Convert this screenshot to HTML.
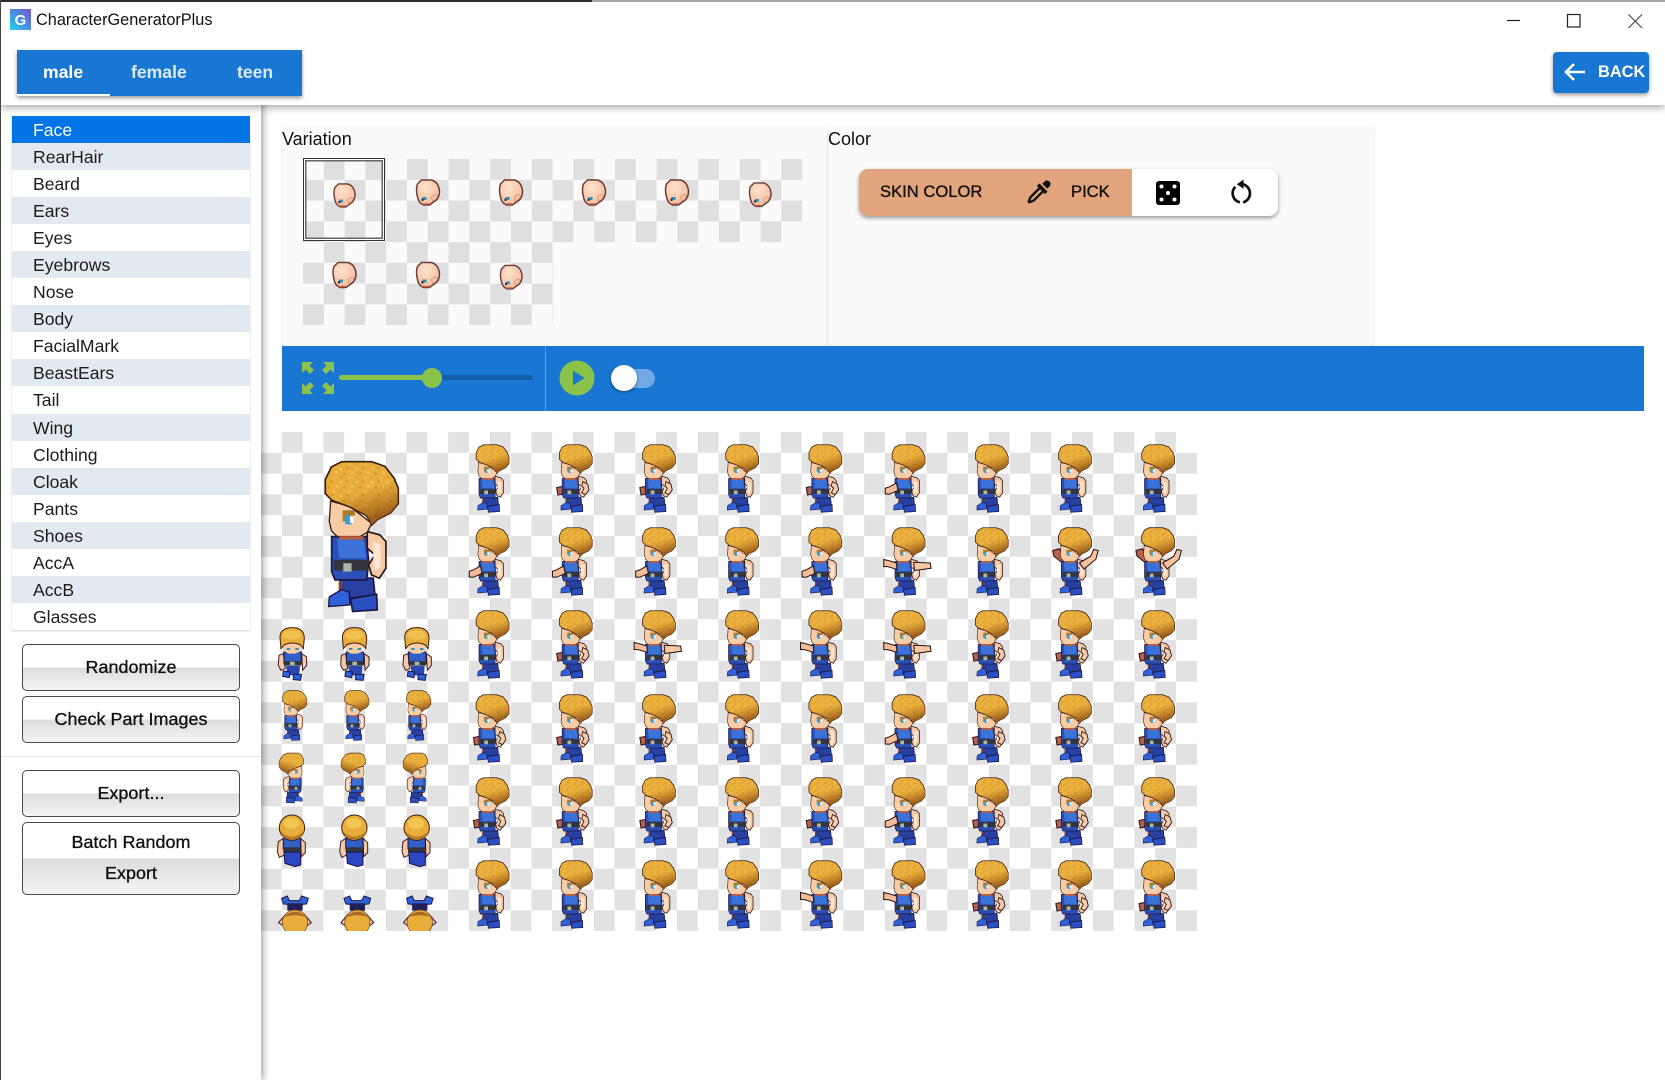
<!DOCTYPE html>
<html lang="en"><head><meta charset="utf-8"><title>CharacterGeneratorPlus</title>
<style>
html,body{margin:0;padding:0;width:1665px;height:1080px;overflow:hidden;background:#fff;font-family:"Liberation Sans",sans-serif;color:#1a1a1a}
.a{position:absolute}
#top1{left:0;top:0;width:592px;height:2px;background:#2e2e2e;z-index:9}
#top2{left:592px;top:0;width:1073px;height:2px;background:#a5a5a5;z-index:9}
#lb{left:0;top:0;width:1px;height:1080px;background:#444;z-index:9}
#hdr{left:0;top:0;width:1665px;height:105px;background:#fff;box-shadow:0 2px 8px rgba(0,0,0,.38);z-index:4}
#title{left:36px;top:10px;font-size:16.3px;line-height:20px;color:#111}
#tabs{left:16.5px;top:49.5px;width:285px;height:46.5px;background:#1976d2;box-shadow:0 2px 4px rgba(0,0,0,.4);color:#fff;font-weight:700;font-size:17.6px}
#tabs span{position:absolute;top:12px;line-height:20px}
#ul{left:0;bottom:0;width:93.5px;height:2.5px;background:#fff}
#back{left:1553px;top:52px;width:96px;height:40.5px;background:#1976d2;border-radius:4px;box-shadow:0 2px 4px rgba(0,0,0,.4);color:#fff;font-weight:700;font-size:16.4px}
#side{left:0;top:0;width:261px;height:1080px;background:#fff;box-shadow:2px 0 7px rgba(0,0,0,.38);z-index:3}
#list{left:12px;top:116px;width:238px;height:514px;box-shadow:0 1px 2px rgba(0,0,0,.18)}
.r{height:27.06px;line-height:28.5px;padding-left:21px;font-size:17.6px;color:#1c1c1c;background:#fff}
.r:nth-child(even){background:#e3e9f0}
.r.s{background:#0274e5;color:#fff}
.b{left:22px;width:216px;border:1.5px solid #484848;border-radius:5px;background:linear-gradient(#fff 0,#fff 50%,#dcdcdc 50%,#f4f4f4 100%);text-align:center;font-size:17.9px;letter-spacing:.05px;color:#111;-webkit-text-stroke:.35px #111}
.card{background:#fafafa;border-radius:5px;box-shadow:0 1px 2px rgba(0,0,0,.16)}
.lbl{font-size:18px;line-height:20px;color:#111}
.chk{background:repeating-conic-gradient(#dfdfdf 0 25%,#fafafa 0 50%) 0 0/41.6px 41.6px}
#bar{left:281.5px;top:346px;width:1362.5px;height:65px;background:#1976d2}
#sheet{left:261px;top:431.5px;width:936px;height:499.5px;background:repeating-conic-gradient(#e2e2e2 0 25%,#fff 0 50%) 0 0/41.6px 41.6px}
#grp{left:859px;top:169px;width:418.5px;height:47px;border-radius:9px;background:#fff;box-shadow:0 2px 4px rgba(0,0,0,.4);overflow:hidden;font-size:16.6px;color:#111}
#or{left:0;top:0;width:273px;height:47px;background:#e3a57e}
#grp span{position:absolute;top:13px;line-height:20px;-webkit-text-stroke:.35px #111}
svg{display:block;position:absolute}
</style></head><body>
<div class="a" id="top1"></div><div class="a" id="top2"></div><div class="a" id="lb"></div>

<div class="a" id="sheet"></div>

<svg style="left:261px;top:431px" width="936" height="500" viewBox="261 431 936 500">
<defs>
<pattern id="sp" width="47" height="41" patternUnits="userSpaceOnUse">
<rect width="47" height="41" fill="#e8ad3a"/>
<rect x="4" y="5" width="7" height="7" fill="#f3c95c"/><rect x="24" y="2" width="7" height="7" fill="#d2952c"/><rect x="38" y="16" width="7" height="7" fill="#f3c95c"/><rect x="15" y="20" width="7" height="7" fill="#d2952c"/><rect x="3" y="31" width="7" height="7" fill="#dba034"/><rect x="30" y="32" width="7" height="7" fill="#f0c252"/>
</pattern>
<linearGradient id="hs" x1="0" y1="0" x2=".35" y2="1"><stop offset=".55" stop-color="#a8641c" stop-opacity="0"/><stop offset="1" stop-color="#8f5214" stop-opacity=".85"/></linearGradient>
<g id="hair"><path d="M245 110H335L375 124L403 160L415 190V236L392 264L352 284L336 300L320 272L270 246L216 226L196 206V164L214 126Z" fill="url(#sp)" stroke="#3a1c12" stroke-width="5"/>
<path d="M245 110H335L375 124L403 160L415 190V236L392 264L352 284L336 300L320 272L270 246L216 226L196 206V164L214 126Z" fill="url(#hs)"/></g>
<g id="s0">
<path d="M240 460H340L345 510L270 520L248 510Z" fill="#28409f" stroke="#1c1640" stroke-width="5"/>
<rect x="236" y="470" width="10" height="38" fill="#8a3e2c"/>
<path d="M208 516L245 494L268 502L270 540L206 545Z" fill="#2f62d8" stroke="#1c1640" stroke-width="4"/>
<path d="M272 522L350 508L352 555L278 560Z" fill="#2a50c4" stroke="#1c1640" stroke-width="5"/>
<path d="M215 335H320L326 410L320 465H225L215 440Z" fill="#2a50b8" stroke="#1c1640" stroke-width="5"/>
<path d="M232 342L312 346L318 400H236Z" fill="#3a72d8"/>
<rect x="222" y="405" width="104" height="32" fill="#33343c"/><rect x="250" y="415" width="25" height="25" fill="#a8b8a8"/>
<path d="M322 320L360 330L378 350V430L358 460L335 450L326 420L345 390L322 370Z" fill="#f6c9a6" stroke="#2a1418" stroke-width="5"/>
<path d="M340 350L362 360L362 425L345 440L340 415Z" fill="#fde6d2"/>
<path d="M212 228L270 245L335 295L322 322L300 335H232L215 318L208 290Z" fill="#f8cda6" stroke="#3a1c12" stroke-width="4"/>
<rect x="238" y="334" width="72" height="10" fill="#c05c40"/>
<path d="M248 256H286L284 272H262L256 290L248 290Z" fill="#a87c34"/><rect x="256" y="272" width="20" height="26" fill="#2aa0e8"/><rect x="270" y="274" width="10" height="20" fill="#fff"/>
<use href="#hair"/></g>
<g id="s" transform="scale(.15) translate(-135,-105)"><use href="#s0"/></g>
<g id="p" transform="scale(.15) translate(-135,-105)"><path d="M178 395L232 385L240 435L186 445Z" fill="#b9604a" stroke="#2a1418" stroke-width="7"/><use href="#s0"/><path d="M352 355L385 372L394 410L372 442L345 430L360 400L345 385Z" fill="#f7cbaa" stroke="#2a1418" stroke-width="6"/></g>
<g id="l" transform="scale(.15) translate(-135,-105)"><use href="#s0"/><path d="M225 365L175 392L150 400L150 438L178 440L235 415Z" fill="#f4bd98" stroke="#2a1418" stroke-width="7"/></g>
<g id="h" transform="scale(.15) translate(-135,-105)"><use href="#s0"/><path d="M225 345L170 328L140 322L140 368L170 370L228 388Z" fill="#f4bd98" stroke="#2a1418" stroke-width="7"/></g>
<g id="x" transform="scale(.15) translate(-135,-105)"><use href="#s0"/><path d="M225 345L170 328L140 322L140 368L170 370L228 388Z" fill="#f4bd98" stroke="#2a1418" stroke-width="7"/><path d="M340 340L450 345L455 380L345 395Z" fill="#f7c8a6" stroke="#2a1418" stroke-width="7"/></g>
<g id="u" transform="scale(.15) translate(-135,-105)"><path d="M222 345L165 300L158 262L200 250L240 310Z" fill="#b9604a" stroke="#2a1418" stroke-width="7"/><use href="#s0"/><path d="M335 345L410 300L430 255L460 262L445 320L365 385Z" fill="#f5c29e" stroke="#2a1418" stroke-width="7"/><use href="#hair"/></g>
<g id="f" transform="scale(.3333) translate(-55,-20)">
<path d="M57 105L70 100L76 145L63 150L55 135ZM125 100L140 110V135L128 150Z" fill="#f6c9a6" stroke="#3a1c2a" stroke-width="3"/>
<rect x="72" y="95" width="52" height="35" fill="#2f60c8" stroke="#1c1640" stroke-width="3"/>
<rect x="72" y="122" width="52" height="14" fill="#33343c"/><rect x="90" y="124" width="14" height="10" fill="#a8b8a8"/>
<path d="M78 137H120L118 165H82Z" fill="#2a46b0"/>
<path d="M70 152L90 155L88 172L68 168Z M100 162L125 162L122 180L100 178Z" fill="#2f62d8" stroke="#1c1640" stroke-width="3"/>
<path d="M70 62H125L120 94L105 100H86L72 92Z" fill="#f8cda6"/>
<rect x="80" y="83" width="10" height="6" fill="#2a8fc0"/><rect x="106" y="83" width="10" height="6" fill="#2a8fc0"/>
<path d="M60 50Q62 22 97 22Q133 22 133 55L130 85L122 74Q97 62 72 74L63 85Z" fill="#e9ae3a" stroke="#3a1c12" stroke-width="3"/>
<ellipse cx="96" cy="44" rx="28" ry="14" fill="#f0c050"/>
</g>
<g id="b" transform="scale(.3333) translate(-52,-585)">
<path d="M55 665L70 655L74 705L58 712L52 695ZM122 655L136 668V698L124 710Z" fill="#f6c9a6" stroke="#3a1c2a" stroke-width="3"/>
<rect x="70" y="655" width="52" height="32" fill="#2f60c8" stroke="#1c1640" stroke-width="3"/>
<rect x="70" y="682" width="52" height="14" fill="#33343c"/>
<path d="M72 696H122L122 735L105 740L75 730Z" fill="#2a46c0" stroke="#1c1640" stroke-width="3"/>
<circle cx="96" cy="623" r="38" fill="#e9ae3a" stroke="#3a1c12" stroke-width="3"/>
<path d="M60 632Q96 668 133 632L126 650Q96 668 68 650Z" fill="#b97a26"/>
<ellipse cx="94" cy="610" rx="24" ry="16" fill="#f2c653"/>
</g>
<g id="d" transform="scale(.3333) translate(-55,-826)">
<path d="M65 835L82 828L88 842L118 842L125 828L145 835L140 852L122 854H88L70 852Z" fill="#2f62d8" stroke="#1c1640" stroke-width="3"/>
<rect x="82" y="850" width="46" height="22" fill="#22205a"/>
<path d="M56 908L75 885V922ZM154 908L135 885V922Z" fill="#f6c9a6" stroke="#3a1c2a" stroke-width="3"/>
<circle cx="105" cy="908" r="38" fill="#e9ae3a" stroke="#6a3c18" stroke-width="2"/>
<path d="M70 892Q105 858 140 892Q105 880 70 892Z" fill="#a8682a"/>
</g>
</defs>

<use href="#s" transform="translate(305,460) scale(2.22)"/>

<use href="#s" x="467" y="444"/><use href="#p" x="550.2" y="444"/><use href="#p" x="633.4" y="444"/><use href="#s" x="716.6" y="444"/><use href="#p" x="799.8" y="444"/><use href="#l" x="883" y="444"/><use href="#s" x="966.2" y="444"/><use href="#s" x="1049.4" y="444"/><use href="#s" x="1132.6" y="444"/>

<use href="#l" x="467" y="527"/><use href="#l" x="550.2" y="527"/><use href="#l" x="633.4" y="527"/><use href="#s" x="716.6" y="527"/><use href="#l" x="799.8" y="527"/><use href="#x" x="883" y="527"/><use href="#s" x="966.2" y="527"/><use href="#u" x="1049.4" y="527"/><use href="#u" x="1132.6" y="527"/>

<use href="#s" x="467" y="610"/><use href="#p" x="550.2" y="610"/><use href="#x" x="633.4" y="610"/><use href="#s" x="716.6" y="610"/><use href="#h" x="799.8" y="610"/><use href="#x" x="883" y="610"/><use href="#p" x="966.2" y="610"/><use href="#p" x="1049.4" y="610"/><use href="#p" x="1132.6" y="610"/>

<use href="#p" x="467" y="694"/><use href="#p" x="550.2" y="694"/><use href="#p" x="633.4" y="694"/><use href="#s" x="716.6" y="694"/><use href="#s" x="799.8" y="694"/><use href="#l" x="883" y="694"/><use href="#p" x="966.2" y="694"/><use href="#p" x="1049.4" y="694"/><use href="#p" x="1132.6" y="694"/>

<use href="#p" x="467" y="777"/><use href="#p" x="550.2" y="777"/><use href="#p" x="633.4" y="777"/><use href="#s" x="716.6" y="777"/><use href="#p" x="799.8" y="777"/><use href="#l" x="883" y="777"/><use href="#p" x="966.2" y="777"/><use href="#p" x="1049.4" y="777"/><use href="#p" x="1132.6" y="777"/>

<use href="#s" x="467" y="860"/><use href="#s" x="550.2" y="860"/><use href="#s" x="633.4" y="860"/><use href="#s" x="716.6" y="860"/><use href="#h" x="799.8" y="860"/><use href="#h" x="883" y="860"/><use href="#p" x="966.2" y="860"/><use href="#p" x="1049.4" y="860"/><use href="#p" x="1132.6" y="860"/>

<use href="#f" x="278.3" y="627"/><use href="#f" x="340.7" y="627"/><use href="#f" x="403" y="627"/>
<use href="#s" transform="translate(275.8,690) scale(.74)"/><use href="#s" transform="translate(337.8,690) scale(.74)"/><use href="#s" transform="translate(399.8,690) scale(.74)"/>
<use href="#s" transform="translate(310.2,752.5) scale(-.74,.74)"/><use href="#s" transform="translate(372.2,752.5) scale(-.74,.74)"/><use href="#s" transform="translate(434.2,752.5) scale(-.74,.74)"/>
<use href="#b" x="277.3" y="815"/><use href="#b" x="339.7" y="815"/><use href="#b" x="402" y="815"/>
<use href="#d" x="278.3" y="895.3"/><use href="#d" x="340.7" y="895.3"/><use href="#d" x="403.1" y="895.3"/>
</svg>

<div class="a card" style="left:282px;top:126px;width:545px;height:220px"></div>
<div class="a card" style="left:828px;top:126px;width:545.5px;height:220px"></div>
<div class="a lbl" style="left:282px;top:129px">Variation</div>
<div class="a lbl" style="left:828px;top:129px">Color</div>

<div class="a chk" style="left:303px;top:159px;width:499.2px;height:83.2px"></div>
<div class="a chk" style="left:303px;top:242.2px;width:249.6px;height:83.2px"></div>
<div class="a" style="left:302.5px;top:158.3px;width:80.5px;height:80.5px;border:1.5px solid #333;outline:1px solid #fff;outline-offset:-2.5px;box-shadow:inset 0 0 0 2.5px #666"></div>

<svg style="left:282px;top:126px" width="545" height="220" viewBox="282 126 545 220">
<defs><radialGradient id="fg" cx=".4" cy=".3" r=".8"><stop offset="0" stop-color="#fde3cc"/><stop offset="1" stop-color="#f4b694"/></radialGradient>
<g id="fc"><path d="M6 1H16Q23 3 24 12Q24 20 18 23L14 26H8Q3 24 2 18Q0 10 2 5Z" fill="url(#fg)" stroke="#6a3a36" stroke-width="1.5"/>
<path d="M16 18Q20 14 22 17Q21 21 17 22Z" fill="#f6c3a3" stroke="#c98a70" stroke-width=".7"/>
<path d="M6 25H14" stroke="#c0604a" stroke-width="1.4"/><rect x="7" y="18" width="4" height="3" fill="#2b8fc0"/><rect x="6" y="19.5" width="2" height="2.5" fill="#233"/></g></defs>
<use href="#fc" transform="translate(333,183) scale(.92)"/>
<use href="#fc" transform="translate(415.5,179)"/><use href="#fc" transform="translate(498.5,179)"/><use href="#fc" transform="translate(581.5,179)"/><use href="#fc" transform="translate(664.5,179)"/>
<use href="#fc" transform="translate(748.5,182) scale(.94)"/>
<use href="#fc" transform="translate(332,261.5)"/><use href="#fc" transform="translate(415.5,261.5)"/><use href="#fc" transform="translate(499.5,264.5) scale(.94)"/>
</svg>

<div class="a" id="grp"><div class="a" id="or"></div>
<span style="left:21px">SKIN COLOR</span><span style="left:212px">PICK</span>
<svg style="left:166px;top:9px" width="28" height="28" viewBox="0 0 24 24"><path fill="#111" d="M19.35 11.72L17.22 13.85L15.81 12.43L8.1 20.14L3.5 22L2 20.5L3.86 15.9L11.57 8.19L10.15 6.78L12.28 4.65L19.35 11.72M16.76 3C17.93 1.83 19.83 1.83 21 3C22.17 4.17 22.17 6.07 21 7.24L19.08 9.16L14.84 4.92L16.76 3M5.56 17.03L4.5 19.5L6.97 18.44L14.4 11L13 9.6L5.56 17.03Z"/></svg>
<svg style="left:297px;top:12px" width="24" height="24" viewBox="0 0 24 24"><rect x="0" y="0" width="24" height="24" rx="3" fill="#000"/><g fill="#fff"><circle cx="5.5" cy="5.5" r="2"/><circle cx="18.5" cy="5.5" r="2"/><circle cx="12" cy="12" r="2"/><circle cx="5.5" cy="18.5" r="2"/><circle cx="18.5" cy="18.5" r="2"/></g></svg>
<svg style="left:370px;top:10px" width="25" height="27" viewBox="0 0 24 26"><path d="M13 5A9 9 0 0 1 13.5 22.5M6 7.5A9 9 0 0 0 10.5 22.5" fill="none" stroke="#111" stroke-width="2.6"/><path d="M14 .5L7.5 5L14 9.5Z" fill="#111"/></svg>
</div>

<div class="a" id="bar"></div>
<div class="a" style="left:544.5px;top:346px;width:1.5px;height:65px;background:#5a9fe0"></div>
<svg style="left:302px;top:362px" width="32" height="32" viewBox="0 0 32 32"><g fill="#8bc34a"><path id="ar" d="M0 0H11L7.5 3.5L12 8L8 12L3.5 7.5L0 11Z"/><use href="#ar" transform="translate(32,0) scale(-1,1)"/><use href="#ar" transform="translate(0,32) scale(1,-1)"/><use href="#ar" transform="translate(32,32) scale(-1,-1)"/></g></svg>
<div class="a" style="left:339px;top:375px;width:194px;height:5px;border-radius:3px;background:#155ea8"></div>
<div class="a" style="left:339px;top:375px;width:92px;height:5px;border-radius:3px;background:#8bc34a"></div>
<div class="a" style="left:421.5px;top:368px;width:20px;height:20px;border-radius:50%;background:#8bc34a"></div>
<svg style="left:559px;top:360px" width="36" height="36" viewBox="0 0 36 36"><circle cx="18" cy="18" r="17.5" fill="#8bc34a"/><path d="M14 10.5L25.5 18L14 25.5Z" fill="#1976d2"/></svg>
<div class="a" style="left:612px;top:369px;width:43px;height:19px;border-radius:10px;background:#71a9e4"></div>
<div class="a" style="left:611px;top:365px;width:26px;height:26px;border-radius:50%;background:#fff;box-shadow:0 1px 3px rgba(0,0,0,.4)"></div>

<div class="a" id="side">
<div class="a" id="list">
<div class="r s">Face</div><div class="r">RearHair</div><div class="r">Beard</div><div class="r">Ears</div><div class="r">Eyes</div><div class="r">Eyebrows</div><div class="r">Nose</div><div class="r">Body</div><div class="r">FacialMark</div><div class="r">BeastEars</div><div class="r">Tail</div><div class="r">Wing</div><div class="r">Clothing</div><div class="r">Cloak</div><div class="r">Pants</div><div class="r">Shoes</div><div class="r">AccA</div><div class="r">AccB</div><div class="r">Glasses</div>
</div>
<div class="a b" style="top:644px;height:45px;line-height:45px">Randomize</div>
<div class="a b" style="top:696px;height:45px;line-height:45px">Check Part Images</div>
<div class="a" style="left:0;top:756px;width:261px;height:1px;background:#e2e2e2"></div>
<div class="a b" style="top:770px;height:45px;line-height:45px">Export...</div>
<div class="a b" style="top:822px;height:71px;line-height:31px"><div style="margin-top:4px">Batch Random</div><div>Export</div></div>
</div>

<div class="a" id="hdr">
<svg style="left:10px;top:9px" width="21" height="21" viewBox="0 0 21 21"><defs><linearGradient id="ig" x1="0" y1="1" x2="1" y2="0"><stop offset="0" stop-color="#22d3ee"/><stop offset=".5" stop-color="#4a90e2"/><stop offset="1" stop-color="#7a55c8"/></linearGradient></defs><rect width="21" height="21" fill="url(#ig)"/><text x="10.5" y="16" text-anchor="middle" font-family="Liberation Sans" font-weight="700" font-size="15" fill="#fff">G</text></svg>
<div class="a" id="title">CharacterGeneratorPlus</div>
<div class="a" id="tabs"><div class="a" id="ul"></div><span style="left:26.5px">male</span><span style="left:114.5px;opacity:.85">female</span><span style="left:220.5px;opacity:.85">teen</span></div>
<div class="a" id="back"><svg style="left:10px;top:9px" width="24" height="22" viewBox="0 0 24 22"><path d="M22 11H3M11 3L3 11L11 19" fill="none" stroke="#fff" stroke-width="2.6"/></svg><span class="a" style="left:45px;top:10px;line-height:20px">BACK</span></div>
<svg style="left:1500px;top:10px" width="150" height="24" viewBox="0 0 150 24"><path d="M7 10.5H20" stroke="#222" stroke-width="1.2"/><rect x="67.5" y="4.5" width="12.5" height="12.5" fill="none" stroke="#222" stroke-width="1.2"/><path d="M128.5 4.5L142 18M142 4.5L128.5 18" stroke="#444" stroke-width="1.1"/></svg>
</div>
</body></html>
